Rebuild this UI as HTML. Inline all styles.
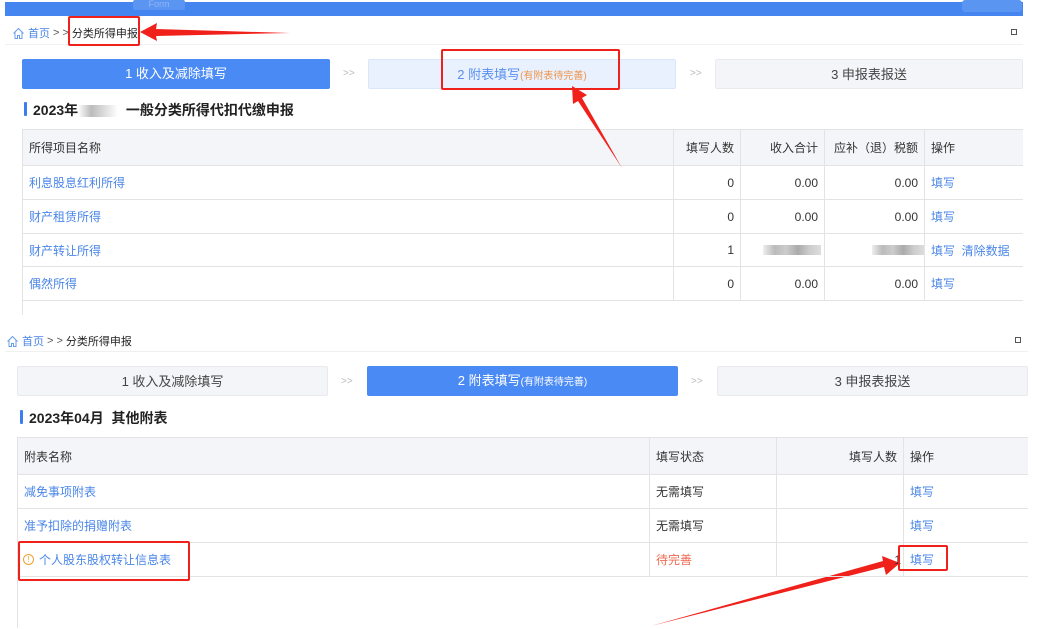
<!DOCTYPE html>
<html><head><meta charset="utf-8"><style>
*{margin:0;padding:0;box-sizing:border-box}
body{width:1038px;height:629px;background:#fff;position:relative;overflow:hidden;font-family:"Liberation Sans","Noto Sans CJK SC",sans-serif;font-size:12px;color:#333}
.a{position:absolute}
.step{position:absolute;height:30px;line-height:30px;text-align:center;font-size:13px;border-radius:2px}
.sep{position:absolute;color:#bbb;font-size:10px}
.t{position:absolute;border-left:1px solid #e3e3e3}
.row{position:absolute;left:0;right:0;border-bottom:1px solid #e3e3e3}
.c{position:absolute;top:0;bottom:0;display:flex;align-items:center;padding:0 6px;border-left:1px solid #e3e3e3}
.c.r{justify-content:flex-end}
.lk{color:#4a86e8}
.h{background:#f4f5f8}
.red{position:absolute;border:2px solid #f0201a;border-radius:2px}
.bc{position:absolute;font-size:11px;display:flex;align-items:center;gap:3px}
.title{position:absolute;font-size:14px;font-weight:bold;color:#222}
.title:before{content:"";position:absolute;left:-9px;top:2px;width:3px;height:14px;background:#3c7ef0;border-radius:1px}
.blur{display:inline-block;height:10px;background:linear-gradient(90deg,#eee,#bbb,#ccc,#aaa,#ccc,#ddd)}
</style></head><body>
<div class="a" style="left:5px;top:2px;width:1018px;height:14px;background:#4485f0"></div>
<div class="a" style="left:133px;top:0;width:52px;height:10px;background:#5b95f2;border-radius:2px;color:#8fb4f5;font-size:9px;line-height:8px;text-align:center">Form</div>
<div class="a" style="left:962px;top:0;width:60px;height:12px;background:#5b95f2;border-radius:3px"></div>

<div class="bc" style="left:12px;top:25px"><svg width="13" height="13" viewBox="0 0 13 13"><path d="M1.5 6.5L6.5 1.5 11.5 6.5M3 5v6.5h2.5V8.5h2v3H10V5" fill="none" stroke="#6a9de8" stroke-width="1"/></svg><span class="lk">首页</span><span style="color:#555"> &gt; &gt; </span><span style="color:#222">分类所得申报</span></div>
<div class="a" style="left:1011px;top:29px;width:6px;height:6px;border:1.5px solid #555"></div>
<div class="a" style="left:5px;top:44px;width:1018px;height:1px;background:#f0f0f0"></div>

<div class="step" style="left:22px;top:59px;width:308px;background:#4a8af4;color:#fff">1 收入及减除填写</div>
<div class="sep" style="left:343px;top:68px">&gt;&gt;</div>
<div class="step" style="left:368px;top:59px;width:308px;background:#e8f1fd;color:#5b8ff0;border:1px solid #d9e7fb">2 附表填写<span style="color:#f0944a;font-size:10px">(有附表待完善)</span></div>
<div class="sep" style="left:690px;top:68px">&gt;&gt;</div>
<div class="step" style="left:715px;top:59px;width:308px;background:#f3f5f8;color:#444;border:1px solid #e8eaee">3 申报表报送</div>

<div class="title" style="left:33px;top:100px">2023年<span class="blur" style="width:40px;height:12px;vertical-align:middle;background:linear-gradient(90deg,#fff,#bbb,#ddd,#fff)"></span>&nbsp;&nbsp;一般分类所得代扣代缴申报</div>

<div class="t" style="left:22px;top:129px;width:1001px;height:172px">
 <div class="row h" style="top:0;height:37px;border-top:1px solid #e3e3e3"><div class="c" style="left:0;border:0">所得项目名称</div><div class="c r" style="left:650px;width:67px">填写人数</div><div class="c r" style="left:717px;width:84px">收入合计</div><div class="c r" style="left:801px;width:100px">应补（退）税额</div><div class="c" style="left:901px;width:100px">操作</div></div>
 <div class="row" style="top:37px;height:34px"><div class="c lk" style="left:0;border:0">利息股息红利所得</div><div class="c r" style="left:650px;width:67px">0</div><div class="c r" style="left:717px;width:84px">0.00</div><div class="c r" style="left:801px;width:100px">0.00</div><div class="c lk" style="left:901px;width:100px">填写</div></div>
 <div class="row" style="top:71px;height:34px"><div class="c lk" style="left:0;border:0">财产租赁所得</div><div class="c r" style="left:650px;width:67px">0</div><div class="c r" style="left:717px;width:84px">0.00</div><div class="c r" style="left:801px;width:100px">0.00</div><div class="c lk" style="left:901px;width:100px">填写</div></div>
 <div class="row" style="top:105px;height:33px"><div class="c lk" style="left:0;border:0">财产转让所得</div><div class="c r" style="left:650px;width:67px">1</div><div class="c r" style="left:717px;width:84px;padding-right:3px"><span class="blur" style="width:58px"></span></div><div class="c r" style="left:801px;width:100px;padding-right:0"><span class="blur" style="width:52px"></span></div><div class="c lk" style="left:901px;width:100px">填写&nbsp;&nbsp;清除数据</div></div>
 <div class="row" style="top:138px;height:34px"><div class="c lk" style="left:0;border:0">偶然所得</div><div class="c r" style="left:650px;width:67px">0</div><div class="c r" style="left:717px;width:84px">0.00</div><div class="c r" style="left:801px;width:100px">0.00</div><div class="c lk" style="left:901px;width:100px">填写</div></div>
</div>
<div class="a" style="left:22px;top:301px;width:1px;height:14px;background:#e3e3e3"></div>

<div class="red" style="left:68px;top:16px;width:72px;height:30px"></div>
<div class="red" style="left:441px;top:49px;width:179px;height:41px"></div>
<svg class="a" style="left:0;top:0" width="1038" height="629">
<polygon points="290,33 156,29 157,23 140,32 157,41 156,36" fill="#f0201a"/>
<polygon points="622,168 582,98 587,95 572,86 573,104 578,101" fill="#f0201a"/>
<polygon points="651,626 884,567 886,575 900,563 882,556 883,561" fill="#f0201a"/>
</svg>

<div class="bc" style="left:6px;top:333px"><svg width="13" height="13" viewBox="0 0 13 13"><path d="M1.5 6.5L6.5 1.5 11.5 6.5M3 5v6.5h2.5V8.5h2v3H10V5" fill="none" stroke="#6a9de8" stroke-width="1"/></svg><span class="lk">首页</span><span style="color:#555"> &gt; &gt; </span><span style="color:#222">分类所得申报</span></div>
<div class="a" style="left:1015px;top:337px;width:6px;height:6px;border:1.5px solid #555"></div>
<div class="a" style="left:5px;top:351px;width:1023px;height:1px;background:#f0f0f0"></div>

<div class="step" style="left:17px;top:366px;width:311px;background:#f3f5f8;color:#444;border:1px solid #e8eaee">1 收入及减除填写</div>
<div class="sep" style="left:341px;top:376px">&gt;&gt;</div>
<div class="step" style="left:367px;top:366px;width:311px;background:#4a8af4;color:#fff">2 附表填写<span style="font-size:10px">(有附表待完善)</span></div>
<div class="sep" style="left:691px;top:376px">&gt;&gt;</div>
<div class="step" style="left:717px;top:366px;width:311px;background:#f3f5f8;color:#444;border:1px solid #e8eaee">3 申报表报送</div>

<div class="title" style="left:29px;top:408px">2023年04月&nbsp;&nbsp;其他附表</div>

<div class="t" style="left:17px;top:437px;width:1011px;height:191px">
 <div class="row h" style="top:0;height:38px;border-top:1px solid #e3e3e3"><div class="c" style="left:0;border:0">附表名称</div><div class="c" style="left:631px;width:127px">填写状态</div><div class="c r" style="left:758px;width:127px">填写人数</div><div class="c" style="left:885px;width:126px">操作</div></div>
 <div class="row" style="top:38px;height:34px"><div class="c lk" style="left:0;border:0">减免事项附表</div><div class="c" style="left:631px;width:127px">无需填写</div><div class="c" style="left:758px;width:127px"></div><div class="c lk" style="left:885px;width:126px">填写</div></div>
 <div class="row" style="top:72px;height:34px"><div class="c lk" style="left:0;border:0">准予扣除的捐赠附表</div><div class="c" style="left:631px;width:127px">无需填写</div><div class="c" style="left:758px;width:127px"></div><div class="c lk" style="left:885px;width:126px">填写</div></div>
 <div class="row" style="top:106px;height:34px"><div class="c lk" style="left:0;border:0;padding-left:5px"><span style="display:inline-block;width:11px;height:11px;border:1px solid #f0a030;border-radius:50%;color:#f0a030;font-size:8px;line-height:9px;text-align:center;margin-right:5px">!</span>个人股东股权转让信息表</div><div class="c" style="left:631px;width:127px;color:#f06a50">待完善</div><div class="c r" style="left:758px;width:127px;padding-right:2px">1</div><div class="c lk" style="left:885px;width:126px">填写</div></div>
</div>

<div class="red" style="left:18px;top:541px;width:172px;height:40px"></div>
<div class="red" style="left:898px;top:545px;width:50px;height:26px"></div>
</body></html>
